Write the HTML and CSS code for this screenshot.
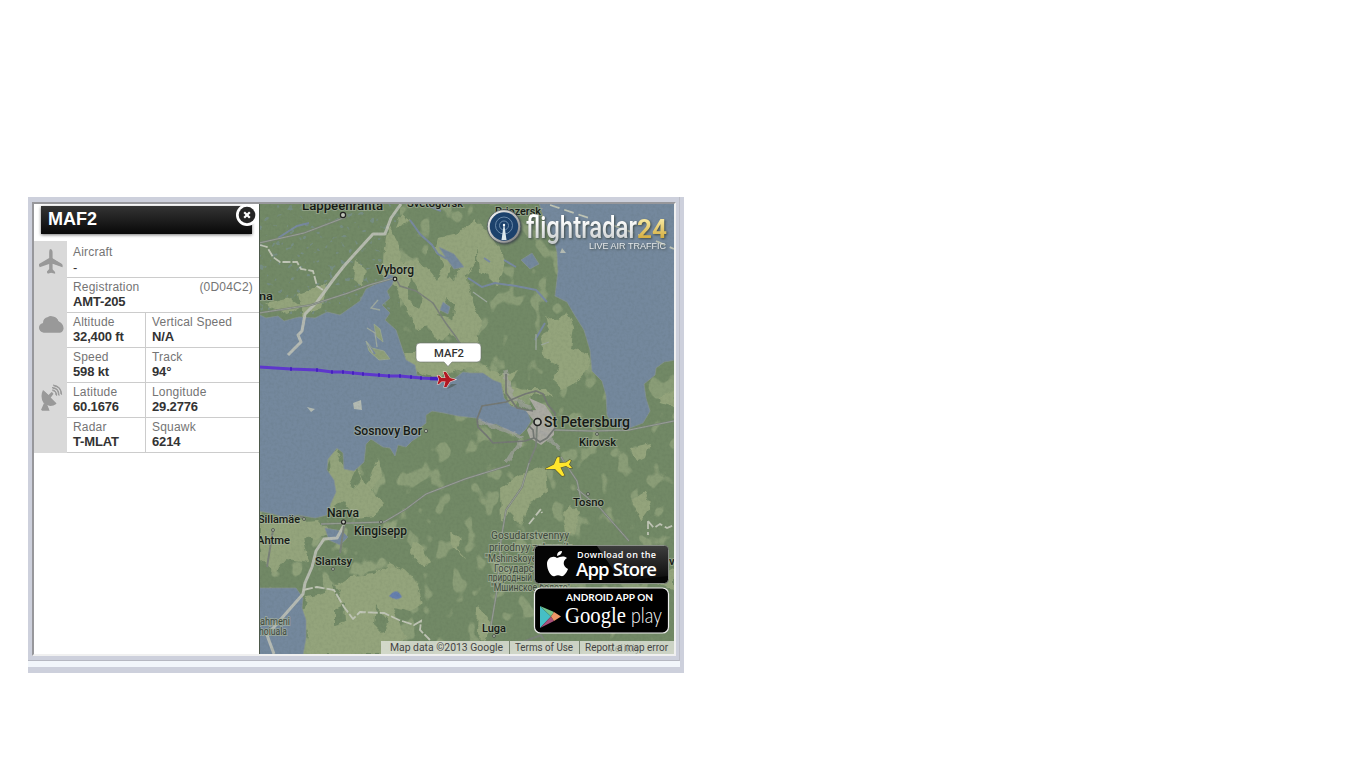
FILE: index.html
```html
<!DOCTYPE html>
<html lang="en">
<head>
<meta charset="utf-8">
<title>Flight map</title>
<link rel="stylesheet" href="styles.css">
</head>
<body>
<main class="widget">
<div class="frame">
<div class="viewport">
<aside class="panel">
  <header class="title"><h1>MAF2</h1>
    <svg class="close" width="24" height="24" viewBox="0 0 24 24"><circle cx="12" cy="12" r="11" fill="#fff"/><circle cx="12" cy="12" r="8.300" fill="#252525"/><path d="M9.2 9.2l5.6 5.6m0-5.6l-5.6 5.6" stroke="#fff" stroke-width="2.2"/></svg>
  </header>
  <div class="details">
    <div class="icons">
      <svg width="33" height="211" viewBox="34 241 33 211">
        <g fill="#fff" transform="translate(.6 .8)"><use href="#silhouettes"/></g>
        <g id="silhouettes" fill="#999">
          <path d="M50.500 249Q52 249 52 252V258L62 264V266.500L52 263V269L54.500 271.500V273L50.500 272L47 273V271.500L49.200 269V263L39 266.500V264L49.200 258V252Q49.200 249 50.500 249Z"/>
          <path d="M43 332Q39 331 39 327.500Q39 324 43 323Q43 318 48 317Q50 315.500 53 316.500Q57 317 58 321Q63 323 63 328Q62 332 59 332Z"/>
          <path d="M43 390Q40 396 43 402Q49 408 56 403L50 397L53 393L51.500 392L48.500 395ZM44 403L41 410H49L47 405Z"/>
          <path d="M52 390Q56 390 56 395M52 387.500Q58.500 387.500 58.500 395M53 385Q61 386 61 394" fill="none" stroke="#999" stroke-width="1.100"/>
        </g>
      </svg>
    </div>
    <dl class="grid">
      <div class="cell wide first"><dt>Aircraft</dt><dd>-</dd></div>
      <div class="cell wide"><dt><span>Registration</span><span>(0D04C2)</span></dt><dd>AMT-205</dd></div>
      <div class="cell"><dt>Altitude</dt><dd>32,400 ft</dd></div><div class="cell right"><dt>Vertical Speed</dt><dd>N/A</dd></div>
      <div class="cell"><dt>Speed</dt><dd>598 kt</dd></div><div class="cell right"><dt>Track</dt><dd>94°</dd></div>
      <div class="cell"><dt>Latitude</dt><dd>60.1676</dd></div><div class="cell right"><dt>Longitude</dt><dd>29.2776</dd></div>
      <div class="cell"><dt>Radar</dt><dd>T-MLAT</dd></div><div class="cell right"><dt>Squawk</dt><dd>6214</dd></div>
    </dl>
  </div>
</aside>
<svg class="map" width="415" height="450" viewBox="259 204 415 450">
<defs>
  <filter id="mottle" x="0" y="0" width="100%" height="100%" color-interpolation-filters="sRGB"><feTurbulence type="fractalNoise" baseFrequency=".06 .045" numOctaves="2" seed="8"/><feColorMatrix values="0 0 0 0 .56  0 0 0 0 .63  0 0 0 0 .48  14 0 0 0 -8.300"/></filter>
  <filter id="grain" x="0" y="0" width="100%" height="100%" color-interpolation-filters="sRGB"><feTurbulence type="fractalNoise" baseFrequency=".35" numOctaves="2" seed="3"/><feColorMatrix values="0 0 0 0 .2  0 0 0 0 .26  0 0 0 0 .2  1.200 0 0 0 -.48"/></filter>
  <filter id="ponds" x="0" y="0" width="100%" height="100%" color-interpolation-filters="sRGB"><feTurbulence type="fractalNoise" baseFrequency=".17" numOctaves="2" seed="5"/><feColorMatrix values="0 0 0 0 .48  0 0 0 0 .57  0 0 0 0 .62  12 0 0 0 -7.900"/></filter>
  <filter id="rough"><feTurbulence type="fractalNoise" baseFrequency=".12" numOctaves="2" seed="4"/><feDisplacementMap in="SourceGraphic" scale="7" xChannelSelector="R" yChannelSelector="G"/></filter>
  <linearGradient id="silver" x1="0" y1="0" x2="0" y2="1"><stop offset=".3" stop-color="#fff"/><stop offset="1" stop-color="#bfc3c4"/></linearGradient>
  <linearGradient id="gold" x1="0" y1="0" x2="0" y2="1"><stop offset=".2" stop-color="#f6e69c"/><stop offset="1" stop-color="#c99b22"/></linearGradient>
  <linearGradient id="gloss" x1="0" y1="0" x2="0" y2="1"><stop offset="0" stop-color="#555"/><stop offset="1" stop-color="#0c0c0c"/></linearGradient>
  <linearGradient id="rim" x1="0" y1="0" x2="1" y2="1"><stop offset="0" stop-color="#fff"/><stop offset="1" stop-color="#777"/></linearGradient>
</defs>
<rect x="259" y="204" width="415" height="450" fill="#728966"/>
<rect x="400" y="204" width="274" height="450" filter="url(#mottle)" opacity=".85"/>
<rect x="259" y="450" width="141" height="204" filter="url(#mottle)"/>
<rect x="259" y="204" width="141" height="110" filter="url(#ponds)" opacity=".5"/>
<g fill="#94a47c" filter="url(#rough)">
  <path d="M388 225L398 242 402 263 416 258 427 270 438 238 458 234 476 218V262L466 275 472 300 482 322 476 345H462L450 333 438 342 428 326 416 330 405 306 396 288 382 275 384 248Z"/>
  <path d="M472 220Q500 235 505 265L498 285 480 270ZM356 260L366 270 363 286 353 280ZM298 294L327 284 322 308 303 316ZM402 211L408 223 395 230ZM265 304L290 298 302 306 287 315Z"/>
  <path d="M402 353H443L456 356 470 359 501 375 518 370 508 385 525 389 546 389 551 398 536 393 520 398 512 408 500 384 470 367 448 374 435 378 417 373 404 360Z"/>
  <path d="M540 335L554 327 566 311 574 327 571 348 587 353 590 367 575 383 563 389 553 380 559 365 545 358ZM545 315L557 320 565 335 550 334Z"/>
  <path d="M328 460L336 449 344 465 359 470 366 486 378 458 382 475 371 491 384 503 375 516 356 518 343 501 331 510Z"/>
  <path d="M307 596L330 591 351 576 374 574 391 563 404 570 416 581 423 603 410 612 393 608 405 635 396 654H305L308 635 301 617Z"/>
  <path d="M413 541L422 548 430 562 424 568 411 553ZM450 530L462 540 457 548 467 560 451 546ZM477 605L492 622 486 644 476 634ZM500 489L519 475 546 467 548 493 530 502 521 525 508 512 501 523Z"/>
  <path d="M563 514L571 505 578 513 575 536 566 531ZM630 448L650 443 645 458 637 462ZM631 500L645 492 651 508 641 522ZM658 396L674 390V407L661 403ZM651 561L674 570V590L655 583ZM260 520Q276 512 290 522L318 520 329 532 315 540 303 538 310 562 285 559 275 573 260 559Z"/>
</g>
<g fill="#728966" filter="url(#rough)"><path d="M410 276L422 296 418 309 408 299ZM431 241L444 266 437 280 424 263ZM447 299L455 306 452 320 438 315ZM477 337L491 330 491 350 478 350ZM452 265L460 265 455 280 447 276ZM334 609L345 604 346 622 334 626ZM376 606L389 622 383 633 374 624ZM333 584L341 590 337 600ZM357 467L361 479 355 491 350 481Z"/></g>
<g fill="#74889d" stroke="#879493" stroke-width=".7">
  <path d="M260 315L266 318 278 316 284 321 299 317 315 318 327 312 340 315 350 308 360 301 366 289 374 285 382 282 389 274 395 277 392 285 387 291 390 298 382 305 390 313 385 320 396 330 402 348 406 360 415 365 417 375 432 379 446 382 454 379 463 372 470 373 483 373 493 380 501 383 504 398 511 406 527 411 531 421 526 429 520 435 507 430 496 424 489 425 476 418 458 416 444 413 432 411 426 415 426 423 416 431 421 435 412 441 406 447 398 445 395 456 390 448 383 447 371 439 366 444 364 462 354 471 344 469 343 453 337 448 328 459 327 470 334 480 336 492 331 503 327 515 315 518 298 515 286 518 273 514 259 511V315Z"/>
  <path d="M539 203L545 222 554 240 557 252 558 271 555 296 567 302 574 314 584 330 590 350 592 371 602 381 606 395 607 415 613 426 627 429 643 423 650 411 646 398 644 384 655 375 656 368 664 362 675 360V203Z"/>
  <path d="M259 588H278L296 588 303 598 302 608 306 620V638L303 655H259Z"/>
  <path d="M521 260L532 253 539 264 530 269ZM439 247L454 254 464 267 454 269 446 258ZM443 302L450 307 448 314 440 310ZM325 528L342 531 348 537 340 545 329 540Z"/>
  <path d="M389 596Q397 586 402 597Q396 602 389 596Z" fill="#657fae"/>
</g>
<g fill="#8f9f79" stroke="#9caa93" stroke-width=".8"><path d="M366 341L372 348 384 351 390 359 379 360 369 351ZM374 324L380 329 383 342 376 336Z"/></g>
<g fill="none" stroke="#7889a0" stroke-width="2"><path d="M410 220L420 234 432 245 438 254 447 259M468 278L482 287 495 283 516 286 536 290 547 302M484 258L490 262M504 260L516 267M278 238L297 226 309 223M374 302V310M367 319L376 338M368 345L375 354M429 206L441 211M545 323L535 340"/></g>
<g fill="none" stroke="#9da89e" stroke-width="1.300"><path d="M378 300L371 308 380 310M367 328L375 333 377 347M366 341L373 353M536 334V350M541 345L549 342M473 292L487 302"/></g>
<path d="M353 403L361 400 362 410 354 409ZM307 407L315 409 311 412ZM324 405L332 407ZM562 248L566 253H560Z" fill="#b3bab2"/>
<path d="M529 398L545 405 554 418 554 435 541 445 530 438 527 430 534 421 526 411 536 410Z" fill="#aaa9a2"/>
<g fill="none" stroke="#a5a5a3" stroke-width="4" opacity=".65" filter="url(#rough)"><path d="M505 370L511 396 531 409M540 430L560 449M520 441L506 463M478 421L505 430 523 438"/></g>
<g fill="none" stroke="#bdc0b6" stroke-width="3" stroke-linejoin="round" opacity=".9"><path d="M401 204L391 218 385 234H373L352 257 344 266 333 280 317 302 305 314 302 331 298 335 301 342 288 355M344 525L337 538 324 539 316 551 312 567 305 583 303 594 267 635 274 654"/></g>
<g fill="none" stroke="#c0c5b6" stroke-width="1.800"><path d="M260 245L267 247 273 257 280 262 297 262 301 269 313 271 317 286 323 290" stroke-dasharray="8 2"/><path d="M303 590L317 587 334 590 344 607 353 619 360 612 384 613 399 620 414 625 421 621 420 630 430 640" stroke-dasharray="10 2"/><path d="M550 205L592 219M610 224L639 235M656 241L674 249" stroke-dasharray="10 5"/><path d="M648 521L654 528 660 524 667 528 674 525M648 521V535M529 524L541 509 542 513" stroke-dasharray="8 3"/></g>
<g fill="none" stroke="#7b827a" stroke-width="2.200"><path d="M395 277L400 286 416 291 433 303 445 322 456 337 466 353" stroke-width="1.500"/><path d="M259 313L311 305 348 293 369 285 394 278M259 243L304 233 346 217M259 519L304 517M321 524L384 522 406 509 426 494 465 479 510 465M537 426L536 446 529 463 522 487 506 510M554 430L593 431 629 430 674 421M561 457L577 481 582 504M577 489L600 508 629 541M506 510L501 540 497 590 490 632M497 654L517 644 541 635 552 654M273 530L267 567M344 526L340 553" stroke-width="1.900"/></g>
<g fill="none" stroke="#a0a79d" stroke-width=".8"><path d="M259 313L311 305 348 293 369 285 394 278M259 243L304 233 346 217M321 524L384 522 406 509 426 494 465 479 510 465M529 463L522 487 506 510M554 430L593 431 629 430 674 421M561 457L577 481 582 504M577 489L600 508 629 541M506 510L501 540 497 590 490 632"/></g>
<path d="M534 438L525 441 493 443 487 436 478 427 477 419 482 406 506 402 525 394 536 391 543 394 548 405 555 413 555 428 547 438 540 442 534 438L533 430 529 426M506 374L506 393 517 408 533 411" fill="none" stroke="#747874" stroke-width="1.700"/>
<rect x="259" y="204" width="415" height="450" filter="url(#grain)" opacity=".13"/>
<g class="place">
  <text x="302" y="210" textLength="81" lengthAdjust="spacingAndGlyphs" class="mid">Lappeenranta</text><text x="407" y="207" textLength="56" lengthAdjust="spacingAndGlyphs">Svetogorsk</text><text x="495" y="215" textLength="46" lengthAdjust="spacingAndGlyphs">Priozersk</text>
  <text x="376" y="274" textLength="38" lengthAdjust="spacingAndGlyphs" class="mid">Vyborg</text><text x="259" y="300" textLength="14" lengthAdjust="spacingAndGlyphs">na</text><text x="354" y="435" textLength="68" lengthAdjust="spacingAndGlyphs" class="mid">Sosnovy Bor</text>
  <text x="544" y="427" textLength="86" lengthAdjust="spacingAndGlyphs" class="city">St Petersburg</text><text x="579" y="446" textLength="37" lengthAdjust="spacingAndGlyphs">Kirovsk</text><text x="573" y="506" textLength="31" lengthAdjust="spacingAndGlyphs">Tosno</text>
  <text x="327" y="517" textLength="32" lengthAdjust="spacingAndGlyphs" class="mid">Narva</text><text x="354" y="535" textLength="53" lengthAdjust="spacingAndGlyphs" class="mid">Kingisepp</text><text x="258" y="523" textLength="42" lengthAdjust="spacingAndGlyphs">Sillamäe</text><text x="257" y="544" textLength="33" lengthAdjust="spacingAndGlyphs">Ahtme</text><text x="315" y="565" textLength="37" lengthAdjust="spacingAndGlyphs">Slantsy</text><text x="482" y="632" textLength="24" lengthAdjust="spacingAndGlyphs">Luga</text><text x="669" y="565">v</text>
</g>
<g class="region"><text x="491" y="539" textLength="78" lengthAdjust="spacingAndGlyphs">Gosudarstvennyy</text><text x="489" y="551" textLength="82" lengthAdjust="spacingAndGlyphs">prirodnyy zakaznik</text><text x="485" y="562" textLength="82" lengthAdjust="spacingAndGlyphs">"Mshinskoye boloto"</text><text x="494" y="572" textLength="78" lengthAdjust="spacingAndGlyphs">Государственный</text><text x="488" y="581" textLength="82" lengthAdjust="spacingAndGlyphs">природный заказник</text><text x="491" y="591" textLength="79" lengthAdjust="spacingAndGlyphs">"Мшинское болото"</text><text x="260" y="625" textLength="30" lengthAdjust="spacingAndGlyphs">ahmeni</text><text x="259" y="635" textLength="28" lengthAdjust="spacingAndGlyphs">hoiuala</text></g>
<g fill="#bfc3b9" stroke="#222" stroke-width="1.200"><circle cx="537.500" cy="422" r="3.500" stroke-width="1.700"/><circle cx="343" cy="215" r="2.600"/><circle cx="395" cy="279" r="1.800"/><circle cx="343.500" cy="522" r="2"/></g>
<g fill="#aab2a4" stroke="#4f574e" stroke-width=".9"><circle cx="426" cy="431" r="1.700"/><circle cx="304" cy="519" r="1.500"/><circle cx="273" cy="530" r="1.500"/><circle cx="381" cy="522" r="1.500"/><circle cx="333" cy="569" r="1.500"/><circle cx="597" cy="434" r="1.500"/><circle cx="588" cy="494" r="1.500"/><circle cx="494" cy="636" r="1.500"/></g>
<path d="M259 367L291 369 317 370 332 372 343 372 363 374 389 376 400 376 421 378 440 379" fill="none" stroke="#5d37cc" stroke-width="2.800"/>
<path d="M290 369h2M316 370h2M331 372h2M342 372h2M352 373h2M362 374h2M378 375h2M388 376h2M399 376h2M410 377h2M420 378h2M430 378.500h8" stroke="#4520c0" stroke-width="3.400"/>
<path d="M447 389L451 384H457L452 387Z" fill="#49564f" opacity=".6"/>
<path d="M455.500 379.500L450 378 446 372H443.500L445.500 378H441.500L439 375.500H437.500L439 379.500 437.500 384H439L441.500 381.500H445.500L444 387H446.500L450 381.500Z" fill="#b21722" stroke="#eedbd6" stroke-width="1.100" paint-order="stroke"/>
<path d="M545 469L554 464.500 557 457.500 559.500 457 559.500 463 566 462.500 569.500 460 571 460.500 569 464.500 572 468 569.500 468 566 466 560.500 467.500 564.500 475.500 562 476 555 469Z" fill="#ffe62c" stroke="#58562d" stroke-width="1.200" paint-order="stroke"/>
<path d="M420 343H477Q481 343 481 347V358Q481 362 477 362H452L448 366.500 444 362H420Q416 362 416 358V347Q416 343 420 343Z" fill="#fff" stroke="#697069" stroke-width=".6"/><text x="434" y="357" textLength="30" lengthAdjust="spacingAndGlyphs" class="tip">MAF2</text>
<g class="brand"><circle cx="504" cy="226.500" r="16.700" fill="url(#rim)" stroke="#4b5358" stroke-width=".7"/><circle cx="504" cy="226.500" r="14.200" fill="#1c416c"/><g fill="none" stroke="#7e9bb8" stroke-width=".8"><circle cx="504" cy="225.500" r="4.500"/><circle cx="504" cy="225.500" r="8.500"/></g><path d="M503.500 226H504.500L506.500 240H501.500Z" fill="#dbe7ed"/><circle cx="504" cy="225" r="1.200" fill="#fff"/>
<text x="526" y="238" textLength="111" lengthAdjust="spacingAndGlyphs" class="logo">flightradar</text><text x="637" y="238" textLength="30" lengthAdjust="spacingAndGlyphs" class="logo number">24</text><text x="589" y="249" textLength="77" lengthAdjust="spacingAndGlyphs" class="tagline">LIVE AIR TRAFFIC</text></g>
<g class="badges"><rect x="534.500" y="545.500" width="134" height="38" rx="4" fill="#050505" stroke="#8b9089"/><path d="M597 546H664Q668 546 668 550V576L621 581Z" fill="url(#gloss)" opacity=".7"/>
<path d="M557 558C553 555 547 558 547 564C547 571 552 578 555 576Q558 574.500 561 576C564 577 567 572 568 569C562 566 563 560 567 558C563 555 560 557 557 558ZM557 556Q557 551 562 551Q562 555 557 556Z" fill="#fff"/>
<text x="577" y="558" textLength="79" class="store-small">Download on the</text><text x="576" y="576" textLength="81" class="store">App Store</text>
<rect x="534.500" y="588" width="134" height="45" rx="6" fill="#000" stroke="#eee" stroke-width="1.200"/>
<path d="M540 606L551 616.500 540 628Z" fill="#46bfc5"/><path d="M540 606L554 612 551 616.500Z" fill="#76c58b"/><path d="M540 628L551 616.500 554 621Z" fill="#a8507c"/><path d="M551 616.500L554 612 561 616.500 554 621Z" fill="#ef9767"/>
<text x="566" y="601" textLength="87" class="android">ANDROID APP ON</text><text x="565" y="623" textLength="61" lengthAdjust="spacingAndGlyphs" class="google">Google</text><text x="631" y="623" textLength="31" lengthAdjust="spacingAndGlyphs" class="play">play</text></g>
<rect x="381" y="641" width="293" height="13" fill="#dfe2d9" opacity=".83"/><text x="608" y="652" textLength="32" class="under">Velikiy</text>
<g class="credit"><text x="390" y="651" textLength="113" lengthAdjust="spacingAndGlyphs">Map data ©2013 Google</text><text x="515" y="651" textLength="58" lengthAdjust="spacingAndGlyphs">Terms of Use</text><text x="585" y="651" textLength="83" lengthAdjust="spacingAndGlyphs">Report a map error</text></g><path d="M509.500 641V654M579.500 641V654" stroke="#788570"/>
<path d="M259.500 204V654" stroke="#4d594b"/>
</svg>
</div>
</div>
<div class="shelf"></div>
</main>
</body>
</html>
```
FILE: styles.css
```css
* { box-sizing: border-box; }
body { margin: 0; padding: 197px 0 0 28px; background: #fff; font-family: "Liberation Sans", Arial, sans-serif; }
.widget { width: 656px; height: 476px; background: #cdd0dc; }
.frame { width: 652px; height: 464px; padding: 5px 4px 4px; border-right: 1px solid #bbbdc7; border-bottom: 1px solid #b6b8c2; }
.viewport { display: flex; width: 644px; height: 454px; border: 2px solid; border-color: #97979b #f0f0f0 #f0f0f0 #97979b; overflow: hidden; background: #fff; }
.panel { width: 225px; flex: none; padding: 2px 0 0; }
.title { position: relative; height: 28px; margin: 0 7px; background: linear-gradient(#343434, #080808); box-shadow: 0 1px 3px #777; }
h1 { margin: 0; padding: 3px 7px; font-size: 18px; line-height: 21px; color: #fff; }
.close { position: absolute; right: -7px; top: -3px; }
.details { display: flex; margin-top: 7px; }
.icons { width: 33px; height: 212px; background: #d9d9d9; flex: none; }
.icons svg { display: block; }
.grid { display: grid; grid-template-columns: 78px 114px; grid-template-rows: 37px repeat(5, 35px); margin: 0; width: 192px; }
.cell { padding: 2px 6px 0; border-bottom: 1px solid #ccc; }
.cell.wide { grid-column: span 2; }
.cell.first { padding-top: 4px; }
.cell.first dd { line-height: 17px; font-weight: normal; }
.cell.right { border-left: 1px solid #ccc; }
dt { display: flex; justify-content: space-between; font-size: 12px; line-height: 14px; letter-spacing: .2px; color: #747474; white-space: nowrap; }
dd { margin: 0; font-size: 13px; line-height: 15px; letter-spacing: -.15px; font-weight: bold; color: #333; white-space: nowrap; }
.map { display: block; flex: none; }
.map text { font-family: Roboto, sans-serif; }
.place text { font-size: 11.5px; font-weight: 500; fill: #161a16; stroke: #aeb8a6; stroke-width: 2px; stroke-opacity: .5; paint-order: stroke; }
.place .mid { font-size: 12.5px; }
.place .city { font-size: 14.5px; }
.region text { font-size: 10px; fill: #3f493d; stroke: #aab69f; stroke-width: 2px; stroke-opacity: .65; paint-order: stroke; }
.map .tip { font-size: 11.5px; font-weight: 500; fill: #333; }
.brand { filter: drop-shadow(1px 1px 1px #404c4b); }
.map .logo { font-weight: 500; font-size: 32px; fill: url(#silver); }
.map .number { font-size: 26px; font-weight: bold; fill: url(#gold); }
.map .tagline { font-family: "Liberation Sans", sans-serif; font-size: 9px; fill: #e6e9ea; }
.badges text { fill: #fff; }
.map .store-small { font-family: "Open Sans", sans-serif; font-size: 9px; font-weight: 600; }
.map .store { font-family: "Open Sans", sans-serif; font-size: 18.5px; font-weight: 600; }
.map .android { font-family: Lato, sans-serif; font-size: 10px; font-weight: bold; }
.map .google { font-family: "Liberation Serif", serif; font-size: 23px; }
.map .play { font-family: Lato, sans-serif; font-weight: 300; font-size: 21px; }
.credit text { font-size: 10px; fill: #444; }
.map .under { font-size: 10px; fill: #8a9286; opacity: .65; }
.shelf { width: 652px; height: 6px; background: #f2f6fb; }
```
